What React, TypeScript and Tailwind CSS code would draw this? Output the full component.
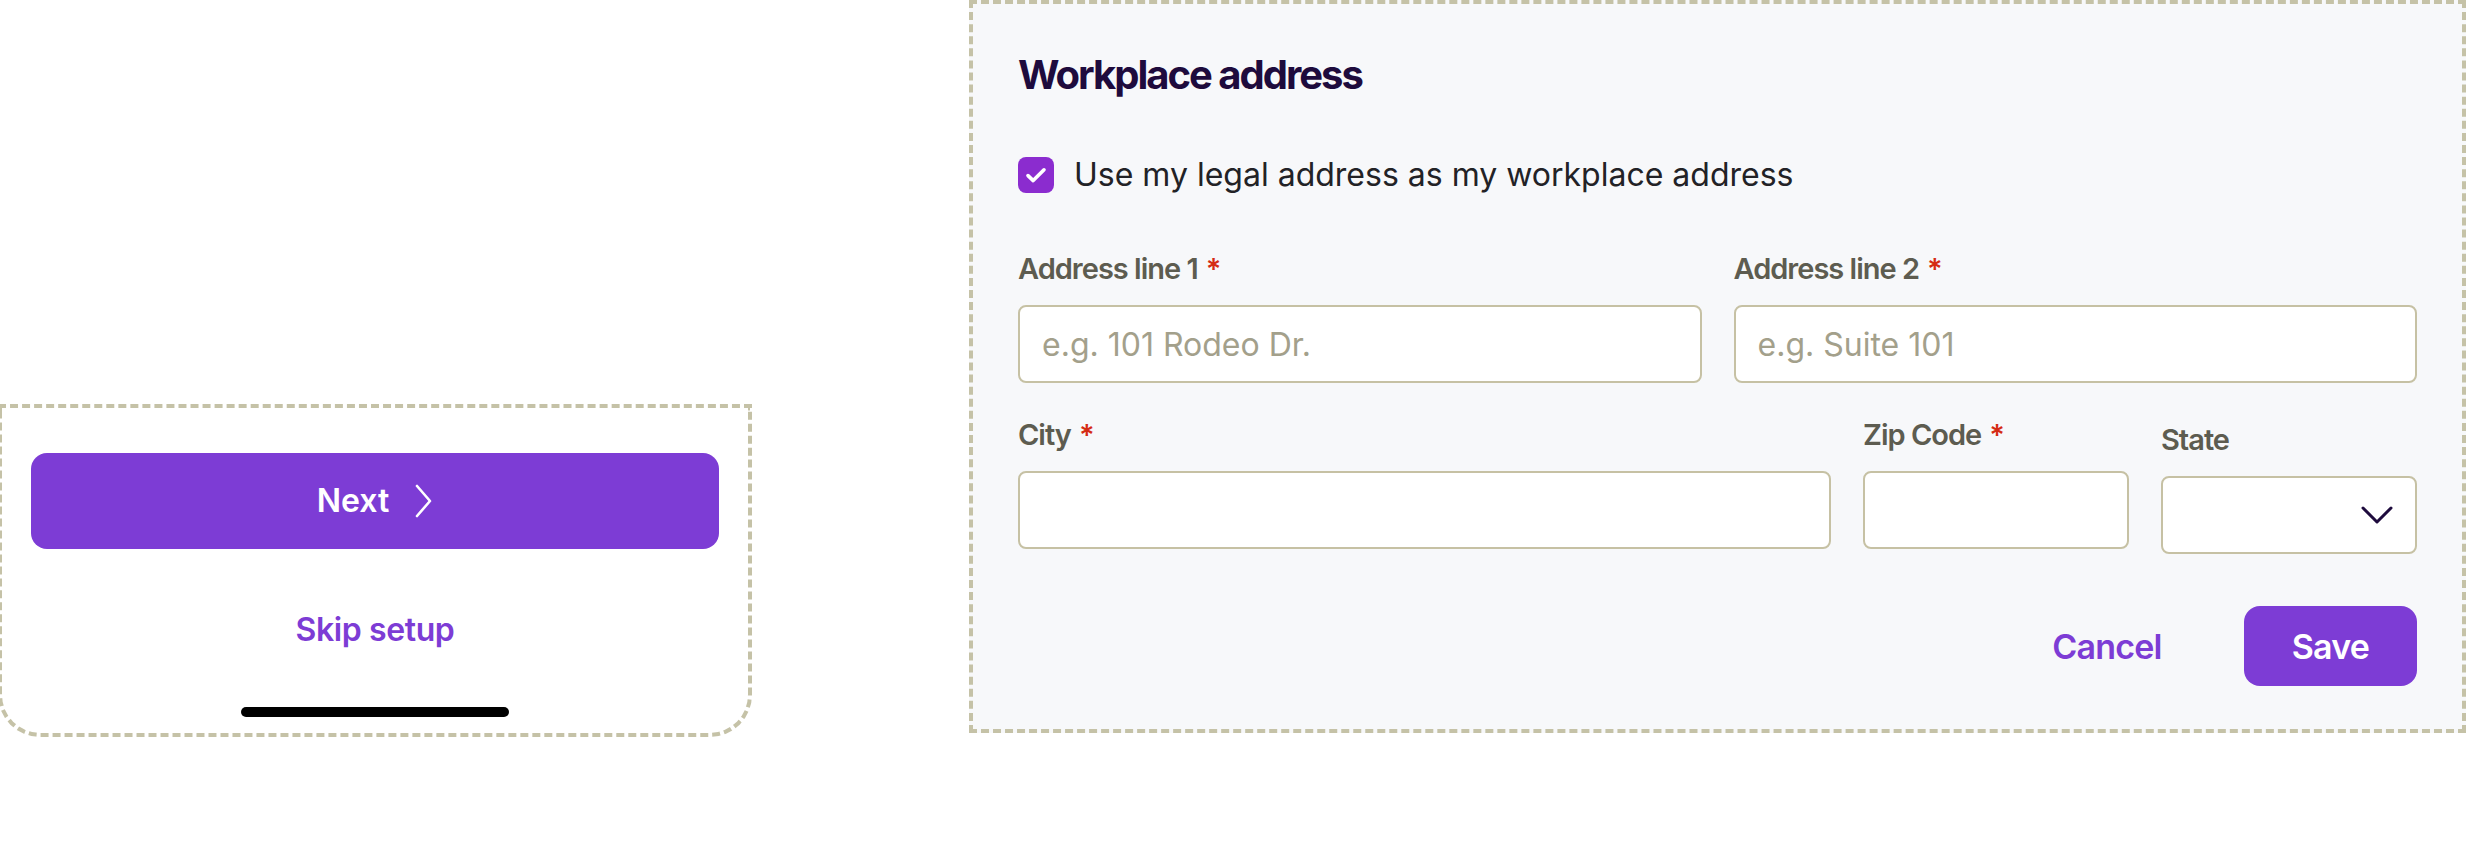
function Field({
  label,
  required,
  placeholder,
  className,
}: {
  label: string;
  required?: boolean;
  placeholder?: string;
  className?: string;
}) {
  return (
    <div className={`flex flex-col ${className ?? ""}`}>
      <label className="text-[14.5px] leading-5 font-semibold tracking-[-0.5px] text-[#5d5c50]">
        {label}
        {required && <span className="ml-1 text-[#d52b14]">*</span>}
      </label>
      <input
        placeholder={placeholder}
        className="mt-2 h-[39px] w-full rounded-[4px] border border-[#c6c1a4] bg-white pl-[11px] text-[16px] text-[#1f1f23] outline-none placeholder:text-[#a3a08b]"
      />
    </div>
  );
}

function MobileFooter() {
  return (
    <div className="-ml-px mt-[202px] flex w-[377px] shrink-0 flex-col rounded-b-[21px] border-2 border-dashed border-[#c5c2a7] bg-white px-[14.5px] pt-[22.5px]">
      <button className="flex h-12 w-full items-center justify-center gap-[13px] rounded-lg bg-[#7d3cd5] text-[16px] font-semibold text-white">
        Next
        <svg width="9" height="17" viewBox="0 0 9 17" fill="none">
          <path d="M1 1l6.5 7.5L1 16" stroke="white" strokeWidth="1.3" strokeLinecap="round" strokeLinejoin="round" />
        </svg>
      </button>
      <button className="mt-[16.5px] h-12 w-full text-[16px] font-semibold tracking-[-0.2px] text-[#7d3cd5]">
        Skip setup
      </button>
      <div className="flex h-[27.5px] items-end justify-center pb-2">
        <div className="h-[5px] w-[134px] rounded-full bg-black" />
      </div>
    </div>
  );
}

function WorkplaceAddress() {
  return (
    <div className="ml-[108.5px] flex w-[748.5px] shrink-0 flex-col border-2 border-dashed border-[#c5c2a7] bg-[#f7f8fa] px-[22.5px] pt-[21.5px] pb-[21.5px]">
      <h2 className="text-[20px] leading-7 font-bold tracking-[-1px] text-[#1e0b3d]">
        Workplace address
      </h2>
      <label className="mt-6 flex h-6 items-center gap-2.5">
        <span className="flex h-[18px] w-[18px] items-center justify-center rounded-[4px] bg-[#8b2ccf]">
          <svg width="12" height="12" viewBox="0 0 12 12" fill="none">
            <path d="M2 6.3l2.6 2.5L10 3.4" stroke="white" strokeWidth="1.8" strokeLinecap="round" strokeLinejoin="round" />
          </svg>
        </span>
        <span className="text-[16px] text-[#222226]">
          Use my legal address as my workplace address
        </span>
      </label>

      <div className="mt-[25px] grid grid-cols-2 gap-x-4">
        <Field label="Address line 1" required placeholder="e.g. 101 Rodeo Dr." />
        <Field label="Address line 2" required placeholder="e.g. Suite 101" />
      </div>

      <div className="mt-4 flex items-start gap-4">
        <Field label="City" required className="flex-1" />
        <Field label="Zip Code" required className="w-[133px]" />
        <div className="flex w-[128px] flex-col pt-[2.5px]">
          <label className="text-[14.5px] leading-5 font-semibold tracking-[-0.5px] text-[#5d5c50]">
            State
          </label>
          <div className="mt-2 flex h-[39px] items-center justify-end rounded-[4px] border border-[#c6c1a4] bg-white pr-[11px]">
            <svg width="16" height="9" viewBox="0 0 16 9" fill="none">
              <path d="M1 1l7 7 7-7" stroke="#1e0b3d" strokeWidth="1.5" strokeLinecap="round" strokeLinejoin="round" />
            </svg>
          </div>
        </div>
      </div>

      <div className="mt-[26px] flex items-center justify-end gap-[17px]">
        <button className="h-10 px-6 text-[17px] font-semibold tracking-[-0.4px] text-[#7d3cd5]">
          Cancel
        </button>
        <button className="h-10 rounded-lg bg-[#7d3cd5] px-6 text-[17px] font-semibold tracking-[-0.4px] text-white">
          Save
        </button>
      </div>
    </div>
  );
}

export default function App() {
  return (
    <div className="min-h-screen bg-white">
      <div className="flex w-[1233px] items-start font-['Inter',sans-serif] [zoom:2]">
        <MobileFooter />
        <WorkplaceAddress />
      </div>
    </div>
  );
}
